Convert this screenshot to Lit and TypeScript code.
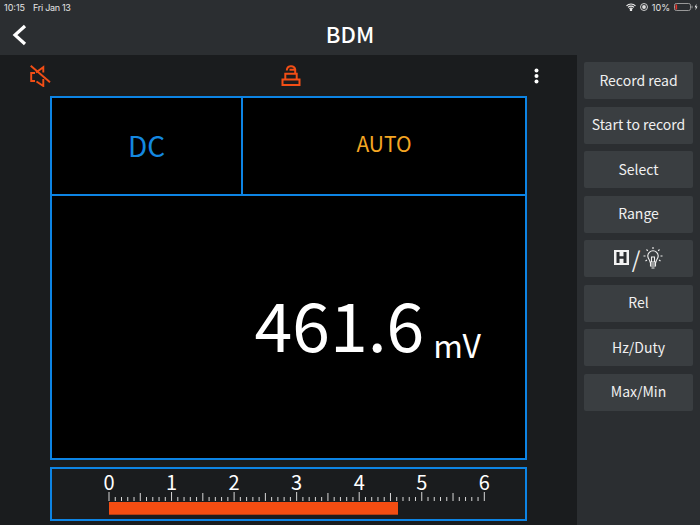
import { LitElement, html, css, svg } from "lit";
import { customElement } from "lit/decorators.js";

const BUTTONS = ["Record read", "Start to record", "Select", "Range", "HOLD", "Rel", "Hz/Duty", "Max/Min"];
const UNIT = 62.55;

// scale ticks, 10 divisions per unit
function scaleTicks() {
  const out = [];
  for (let i = 0; i <= 60; i++) {
    const x = 4 + (i * UNIT) / 10;
    const top = i % 10 === 0 ? 23 : i % 5 === 0 ? 24 : 28;
    out.push(svg`<line x1=${x} x2=${x} y1=${top} y2="32" stroke="#d8d8d8" stroke-width="1"></line>`);
  }
  return out;
}

@customElement("app-root")
export class AppRoot extends LitElement {
  static styles = css`
    :host {
      display: block;
      width: 700px;
      height: 525px;
      overflow: hidden;
      background: #1a1c1e;
      color: #fff;
      font-family: "Noto Sans CJK SC", "Noto Sans", sans-serif;
    }
    .top {
      height: 55px;
      background: #2b2e31;
      display: flex;
      flex-direction: column;
    }
    .status {
      height: 14px;
      padding: 0 2px 0 4px;
      display: flex;
      align-items: center;
      font: 9px "Inter", "Liberation Sans", sans-serif;
      color: #e4e4e4;
    }
    .status .date {
      margin-left: 8px;
      letter-spacing: -0.3px;
    }
    .status .right {
      margin-left: auto;
      display: flex;
      align-items: center;
      gap: 4px;
    }
    .nav {
      flex: 1;
      display: flex;
      align-items: center;
      justify-content: center;
      position: relative;
      padding-bottom: 3px;
    }
    .nav h1 {
      margin: 0;
      font-size: 22px;
      font-weight: 500;
      line-height: 1;
    }
    .back {
      position: absolute;
      left: 12px;
      top: 10px;
    }
    .main {
      display: flex;
      height: 470px;
    }
    .left {
      width: 577px;
      display: flex;
      flex-direction: column;
    }
    .tools {
      height: 41px;
      display: flex;
      align-items: center;
      justify-content: space-between;
      padding: 0 38px 0 29px;
    }
    .lamp {
      margin-right: 4px;
    }
    .meter {
      width: 477px;
      height: 364px;
      margin-left: 50px;
      box-sizing: border-box;
      border: 2px solid #0d84e4;
      background: #000;
      display: flex;
      flex-direction: column;
    }
    .modes {
      height: 96px;
      display: flex;
      border-bottom: 2px solid #0d84e4;
    }
    .dc {
      width: 189px;
      border-right: 2px solid #0d84e4;
      display: flex;
      align-items: center;
      justify-content: center;
      color: #1488e0;
      font-size: 28px;
      padding-bottom: 3px;
    }
    .auto {
      flex: 1;
      display: flex;
      align-items: center;
      justify-content: center;
      color: #f5a623;
      font-size: 21px;
      padding-bottom: 6px;
    }
    .reading {
      flex: 1;
      display: flex;
      align-items: flex-start;
      justify-content: flex-end;
      padding: 93px 44px 0 0;
      gap: 9px;
      line-height: 1;
    }
    .value {
      font-size: 68px;
    }
    .unit {
      font-size: 32px;
      margin-top: 39px;
    }
    .scale {
      width: 477px;
      height: 54px;
      margin: 7px 0 0 50px;
      box-sizing: border-box;
      border: 2px solid #0d84e4;
      display: block;
    }
    .scale text {
      font: 20px "Noto Sans CJK SC", "Noto Sans", sans-serif;
      fill: #fff;
      text-anchor: middle;
    }
    .side {
      flex: 1;
      background: #2b2e31;
      padding: 7px 7px 0 7px;
      display: flex;
      flex-direction: column;
      gap: 7.5px;
    }
    .btn {
      height: 37px;
      box-sizing: border-box;
      padding-bottom: 2px;
      background: #3a3e41;
      border-radius: 2px;
      display: flex;
      align-items: center;
      justify-content: center;
      font-size: 14px;
      color: #f0f0f0;
    }
    .hold {
      gap: 3px;
    }
    .slash {
      font-size: 22px;
      line-height: 1;
    }
  `;

  private statusBar() {
    return html`<div class="status">
      <span>10:15</span><span class="date">Fri Jan 13</span>
      <span class="right">
        <svg width="10" height="8" viewBox="0 0 10 8" fill="none" stroke="#eee" stroke-width="1.1">
          <path d="M.5 2.8a6.4 6.4 0 0 1 9 0M2 4.4a4.2 4.2 0 0 1 6 0M3.4 5.8a2.2 2.2 0 0 1 3.2 0"></path>
          <circle cx="5" cy="7" r=".7" fill="#eee"></circle>
        </svg>
        <svg width="8" height="8" viewBox="0 0 8 8">
          <circle cx="4" cy="4" r="3.5" fill="none" stroke="#ddd" stroke-width=".9"></circle>
          <circle cx="4" cy="4" r="1.9" fill="#ddd"></circle>
        </svg>
        <span>10%</span>
        <svg width="24" height="8" viewBox="0 0 24 8">
          <rect x=".5" y=".5" width="16" height="7" rx="1.8" fill="none" stroke="#999"></rect>
          <rect x="1.5" y="1.5" width="1.6" height="5" fill="#e5332a"></rect>
          <rect x="17.5" y="2.7" width="1" height="2.6" fill="#999"></rect>
          <path d="M22.5 .8 20.6 4.3h1.3l-.4 2.9 2-3.6h-1.3z" fill="#eee"></path>
        </svg>
      </span>
    </div>`;
  }

  private toolbar() {
    return html`<div class="tools">
      <svg width="22" height="22" viewBox="0 0 22 22" fill="none" stroke="#f24e16" stroke-width="1.9">
        <path d="M1.7 .7 21 17.3"></path>
        <path d="M6 8H2.200v8H6M7 7.500 14.300 2.200V7.500M7.500 16.500 14.300 21V14"></path>
      </svg>
      <svg class="lamp" width="20" height="21" viewBox="0 0 20 21" fill="none" stroke="#f24e16" stroke-width="2">
        <path d="M1.500 14.500h17v5.500h-17z"></path>
        <path d="M4.300 14V8.700H15.700V14"></path>
        <path d="M5.800 5.500a4.300 4.300 0 0 1 8.400-1.200V8.700M8.500 4.800h5.700"></path>
      </svg>
      <svg width="5" height="16" viewBox="0 0 5 16" fill="#fff">
        <circle cx="2.5" cy="2.5" r="2"></circle>
        <circle cx="2.5" cy="8" r="2"></circle>
        <circle cx="2.5" cy="13.5" r="2"></circle>
      </svg>
    </div>`;
  }

  private holdLabel() {
    return html`
      <svg width="15" height="15" viewBox="0 0 15 15">
        <rect width="15" height="15" fill="#f2f2f2"></rect>
        <path d="M2.500 2h3v4.200h4V2h3v11h-3V8.800h-4V13h-3z" fill="#2b2e31"></path>
      </svg>
      <span class="slash">/</span>
      <svg width="20" height="22" viewBox="0 0 20 22" fill="none" stroke="#f0f0f0" stroke-width="1.1">
        <path d="M7 15c0-2.500-2.200-3.200-2.200-6a5.200 5.200 0 0 1 10.400 0c0 2.800-2.200 3.500-2.200 6z"></path>
        <path d="M7.500 15v4h5v-4M7.500 17h5M8.500 21h3M8.500 15V10h3v5"></path>
        <path d="M10 0v2M3.500 2.500l1.300 1.300M16.500 2.500l-1.300 1.300M.5 9h2M17.500 9h2M2.500 14l1.500-1M17.500 14l-1.500-1"></path>
      </svg>`;
  }

  render() {
    return html`
      <div class="top">
        ${this.statusBar()}
        <div class="nav">
          <svg class="back" width="15" height="22" viewBox="0 0 15 22" fill="none" stroke="#fff" stroke-width="3.2">
            <path d="M13 2 3 11l10 9"></path>
          </svg>
          <h1>BDM</h1>
        </div>
      </div>
      <div class="main">
        <div class="left">
          ${this.toolbar()}
          <div class="meter">
            <div class="modes">
              <div class="dc">DC</div>
              <div class="auto">AUTO</div>
            </div>
            <div class="reading">
              <span class="value">461.6</span>
              <span class="unit">mV</span>
            </div>
          </div>
          <svg class="scale" viewBox="0 0 473 50">
            ${[0, 1, 2, 3, 4, 5, 6].map((n) => svg`<text x=${4 + n * UNIT + 53} y="21">${n}</text>`)}
            <g transform="translate(53 0)">${scaleTicks()}</g>
            <rect x="57" y="33" width="289" height="12.700" fill="#f44d12"></rect>
          </svg>
        </div>
        <div class="side">
          ${BUTTONS.map((b) =>
            b === "HOLD"
              ? html`<div class="btn hold">${this.holdLabel()}</div>`
              : html`<div class="btn">${b}</div>`
          )}
        </div>
      </div>
    `;
  }
}
